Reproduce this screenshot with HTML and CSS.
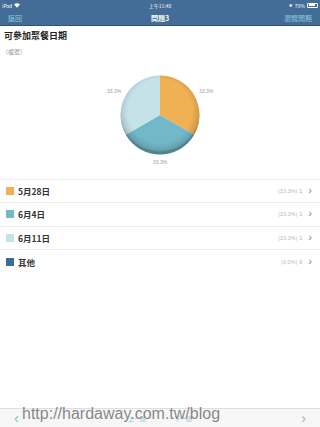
FILE: index.html
```html
<!DOCTYPE html>
<html lang="zh-Hant">
<head>
    <meta charset="UTF-8">
    <meta name="viewport" content="width=device-width, initial-scale=1.0">
    <title>問題3</title>
    <link rel="stylesheet" href="styles.css">
</head>
<body>
    <div class="screen">
        <header class="header">
            <div class="status-bar">
                <span class="status-left">iPad
                    <svg class="wifi" width="6" height="5" viewBox="0 0 6 5">
                        <path d="M0 1.6 A4.2 4.2 0 0 1 6 1.6 L3 4.8 Z" fill="#fff"/>
                    </svg>
                </span>
                <span class="status-time">上午11:48</span>
                <span class="status-right">
                    <span class="bt">✱</span>79%
                    <span class="battery"><span class="battery-level"></span></span>
                </span>
            </div>
            <nav class="navbar">
                <span class="nav-link">返回</span>
                <span class="nav-title">問題3</span>
                <span class="nav-link">瀏覽問題</span>
            </nav>
        </header>

        <section class="question">
            <h1 class="question-title">可參加聚餐日期</h1>
            <p class="question-type">（複選）</p>
        </section>

        <!-- Pie chart -->
        <div class="chart">
            <svg width="320" height="120" viewBox="0 0 320 120">
                <defs>
                    <radialGradient id="shade" cx="50%" cy="45%" r="52%">
                        <stop offset="0.78" stop-color="#000" stop-opacity="0"/>
                        <stop offset="0.95" stop-color="#000" stop-opacity="0.12"/>
                        <stop offset="1" stop-color="#000" stop-opacity="0.3"/>
                    </radialGradient>
                </defs>
                <path d="M160 57 L160 17.5 A39.5 39.5 0 0 1 194.2 76.75 Z" fill="#efb154"/>
                <path d="M160 57 L194.2 76.75 A39.5 39.5 0 0 1 125.8 76.75 Z" fill="#72b8c9"/>
                <path d="M160 57 L125.8 76.75 A39.5 39.5 0 0 1 160 17.5 Z" fill="#c6e2e9"/>
                <circle cx="160" cy="57" r="39.5" fill="url(#shade)"/>
                <text class="pie-label" x="199" y="35">33.3%</text>
                <text class="pie-label" x="107" y="35">33.3%</text>
                <text class="pie-label" x="153" y="106">33.3%</text>
            </svg>
        </div>

        <ul class="answers">
            <li class="answer">
                <span class="swatch swatch-orange"></span>
                <span class="answer-name">5月28日</span>
                <span class="answer-pct">(33.3%)</span>
                <span class="answer-count">1</span>
                <span class="chevron">›</span>
            </li>
            <li class="answer">
                <span class="swatch swatch-teal"></span>
                <span class="answer-name">6月4日</span>
                <span class="answer-pct">(33.3%)</span>
                <span class="answer-count">1</span>
                <span class="chevron">›</span>
            </li>
            <li class="answer">
                <span class="swatch swatch-light"></span>
                <span class="answer-name">6月11日</span>
                <span class="answer-pct">(33.3%)</span>
                <span class="answer-count">1</span>
                <span class="chevron">›</span>
            </li>
            <li class="answer answer-last">
                <span class="swatch swatch-dark"></span>
                <span class="answer-name">其他</span>
                <span class="answer-pct">(0.0%)</span>
                <span class="answer-count">0</span>
                <span class="chevron">›</span>
            </li>
        </ul>

        <footer class="toolbar">
            <span class="tool-arrow">‹</span>
            <span class="tool-center">
                <span>上一題</span>
                <span>下一題</span>
            </span>
            <span class="tool-arrow">›</span>
        </footer>

        <div class="watermark">http://hardaway.com.tw/blog</div>
    </div>
</body>
</html>
```

FILE: styles.css
```css
:root {
    --bar: #436d96;
    --bar-dark: #2f5478;
    --link: #8fcfe0;
    --text: #222;
    --muted: #aaa;
    --line: #ececec;
}

* {
    margin: 0;
    padding: 0;
    box-sizing: border-box;
}

body {
    background: #fff;
    font-family: "Noto Sans CJK TC", "Noto Sans", sans-serif;
    color: var(--text);
}

.screen {
    position: relative;
    width: 320px;
    height: 427px;
    display: flex;
    flex-direction: column;
    overflow: hidden;
}

/* Header */
.header {
    background: var(--bar);
    border-bottom: 1px solid var(--bar-dark);
    color: #fff;
}

.status-bar {
    height: 10px;
    display: flex;
    align-items: center;
    justify-content: space-between;
    padding: 0 2px;
    font-size: 5px;
    line-height: 1;
}

.status-left,
.status-right {
    width: 60px;
    display: flex;
    align-items: center;
    gap: 2px;
}

.status-right {
    justify-content: flex-end;
}

.bt {
    font-size: 4px;
    margin-right: 1px;
}

.battery {
    width: 11px;
    height: 5px;
    border: 0.5px solid #fff;
    border-radius: 1px;
    padding: 0.5px;
    display: flex;
}

.battery-level {
    width: 79%;
    background: #fff;
}

.navbar {
    height: 15px;
    display: flex;
    align-items: center;
    justify-content: space-between;
    padding: 0 8px;
    font-size: 7px;
}

.nav-link {
    color: var(--link);
}

.nav-title {
    font-weight: bold;
    position: absolute;
    left: 0;
    right: 0;
    text-align: center;
    pointer-events: none;
}

/* Question */
.question {
    padding: 3px 4px 0;
}

.question-title {
    font-size: 9px;
    font-weight: bold;
    line-height: 13px;
}

.question-type {
    font-size: 6px;
    color: #999;
    margin-top: 6px;
    margin-left: -2px;
    line-height: 8px;
}

/* Chart */
.chart {
    height: 124px;
    padding-top: 2px;
    border-bottom: 1px solid var(--line);
}

.chart svg {
    display: block;
}

.pie-label {
    font-family: "Liberation Sans", sans-serif;
    font-size: 5px;
    fill: #999;
}

/* Answers */
.answers {
    list-style: none;
}

.answer {
    height: 23.3px;
    display: flex;
    align-items: center;
    padding: 0 8px 0 6px;
    border-bottom: 1px solid var(--line);
}

.answer-last {
    border-bottom: none;
}

.swatch {
    width: 8px;
    height: 8px;
    margin-right: 4px;
}

.swatch-orange { background: #efb154; }
.swatch-teal { background: #72b8c9; }
.swatch-light { background: #c6e2e9; }
.swatch-dark { background: #3c6b93; }

.answer-name {
    flex: 1;
    font-size: 8.5px;
    font-weight: bold;
    color: #333;
}

.answer-pct {
    font-family: "Liberation Sans", sans-serif;
    font-size: 5.5px;
    color: #bbb;
}

.answer-count {
    font-family: "Liberation Sans", sans-serif;
    font-size: 5.5px;
    color: #7bbad0;
    margin-left: 2px;
}

.chevron {
    font-family: "Liberation Sans", sans-serif;
    font-size: 11px;
    color: #5d8db8;
    margin-left: 6px;
    line-height: 1;
    margin-top: -1px;
}

/* Bottom toolbar */
.toolbar {
    margin-top: auto;
    height: 19px;
    background: #f6f6f6;
    border-top: 1px solid #dedede;
    display: flex;
    align-items: center;
    justify-content: space-between;
    padding: 0 14px;
}

.tool-arrow {
    font-family: "Liberation Sans", sans-serif;
    font-size: 14px;
    color: #80bccf;
    line-height: 1;
}

.tool-center {
    display: flex;
    gap: 28px;
    font-size: 6px;
    color: #8cc6d8;
}

/* Blog watermark over the toolbar */
.watermark {
    position: absolute;
    left: 22px;
    top: 406px;
    font-family: "Liberation Sans", sans-serif;
    font-size: 16px;
    line-height: 1;
    color: rgba(110, 110, 110, 0.85);
    text-shadow: 0 0 1px rgba(255, 255, 255, 0.8);
    pointer-events: none;
}
```
